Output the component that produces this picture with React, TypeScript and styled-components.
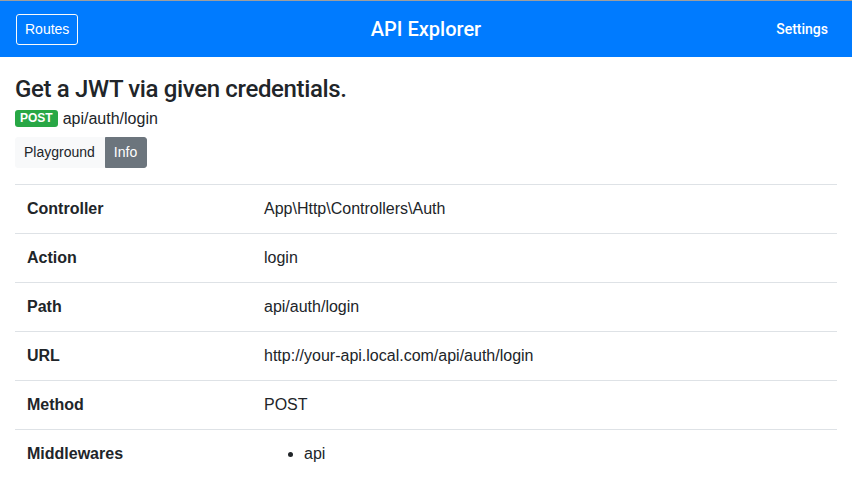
import React from "react";
import styled, { createGlobalStyle } from "styled-components";

const Global = createGlobalStyle`
  html, body { margin: 0; padding: 0; background: #fff; }
  body {
    font-family: "Liberation Sans", Arial, sans-serif;
    font-size: 16px;
    line-height: 1.5;
    color: #212529;
    border-top: 1px solid #9e9e9e;
  }
  * { box-sizing: border-box; }
`;

const Navbar = styled.nav`
  height: 56px;
  background: #007bff;
  display: grid;
  grid-template-columns: 1fr auto 1fr;
  align-items: center;
  padding: 0 16px 0 16px;
`;

const OutlineButton = styled.button`
  justify-self: start;
  font-family: inherit;
  font-size: 14px;
  line-height: 21px;
  padding: 4px 8px;
  color: #fff;
  background: transparent;
  border: 1px solid #f8f9fa;
  border-radius: 3px;
  margin-top: 1px;
`;

const Brand = styled.div`
  color: #fff;
  font-family: Roboto, "Liberation Sans", sans-serif;
  font-weight: 500;
  font-size: 20px;
  line-height: 30px;
`;

const NavLink = styled.div`
  justify-self: end;
  color: #fff;
  font-family: Roboto, "Liberation Sans", sans-serif;
  font-size: 14px;
  font-weight: 500;
  line-height: 21px;
  padding-right: 8px;
`;

const Main = styled.main`
  padding: 18px 15px 0;
`;

const Title = styled.h4`
  margin: 0 0 3px;
  font-family: Roboto, "Liberation Sans", sans-serif;
  font-size: 24px;
  font-weight: 500;
  letter-spacing: -0.35px;
  line-height: 28.8px;
`;

const RouteLine = styled.div`
  display: flex;
  align-items: center;
  gap: 5px;
  height: 24px;
  margin-top: 1px;
  margin-bottom: 6px;
`;

const Badge = styled.span`
  display: inline-block;
  background: #28a745;
  color: #fff;
  font-size: 12px;
  font-weight: 700;
  line-height: 13px;
  padding: 2px 5px;
  border-radius: 3px;
`;

const ButtonGroup = styled.div`
  display: inline-flex;
`;

const TabButton = styled.button<{ $active?: boolean }>`
  font-family: inherit;
  font-size: 14px;
  line-height: 21px;
  padding: 4px 8px;
  border: 1px solid ${(p) => (p.$active ? "#6c757d" : "#f8f9fa")};
  background: ${(p) => (p.$active ? "#6c757d" : "#f8f9fa")};
  color: ${(p) => (p.$active ? "#fff" : "#212529")};
  border-radius: 0;
  &:first-child { border-radius: 3px 0 0 3px; padding-right: 9px; }
  &:last-child { border-radius: 0 3px 3px 0; padding-right: 9px; }
`;

const Table = styled.table`
  width: 100%;
  margin-top: 16px;
  border-collapse: collapse;
  table-layout: fixed;
`;

const Row = styled.tr`
  border-top: 1px solid #dee2e6;
`;

const Label = styled.th`
  width: 237px;
  text-align: left;
  font-weight: 700;
  padding: 12px;
  vertical-align: top;
`;

const Value = styled.td`
  padding: 12px;
  vertical-align: top;
`;

const List = styled.ul`
  margin: 0;
  padding-left: 40px;
`;

const rows: [string, React.ReactNode][] = [
  ["Controller", "App\\Http\\Controllers\\Auth"],
  ["Action", "login"],
  ["Path", "api/auth/login"],
  ["URL", "http://your-api.local.com/api/auth/login"],
  ["Method", "POST"],
  [
    "Middlewares",
    <List>
      <li>api</li>
    </List>,
  ],
];

export default function App() {
  return (
    <>
      <Global />
      <Navbar>
        <OutlineButton>Routes</OutlineButton>
        <Brand>API Explorer</Brand>
        <NavLink>Settings</NavLink>
      </Navbar>
      <Main>
        <Title>Get a JWT via given credentials.</Title>
        <RouteLine>
          <Badge>POST</Badge>
          <span>api/auth/login</span>
        </RouteLine>
        <ButtonGroup>
          <TabButton>Playground</TabButton>
          <TabButton $active>Info</TabButton>
        </ButtonGroup>
        <Table>
          <tbody>
            {rows.map(([k, v]) => (
              <Row key={k}>
                <Label>{k}</Label>
                <Value>{v}</Value>
              </Row>
            ))}
          </tbody>
        </Table>
      </Main>
    </>
  );
}
